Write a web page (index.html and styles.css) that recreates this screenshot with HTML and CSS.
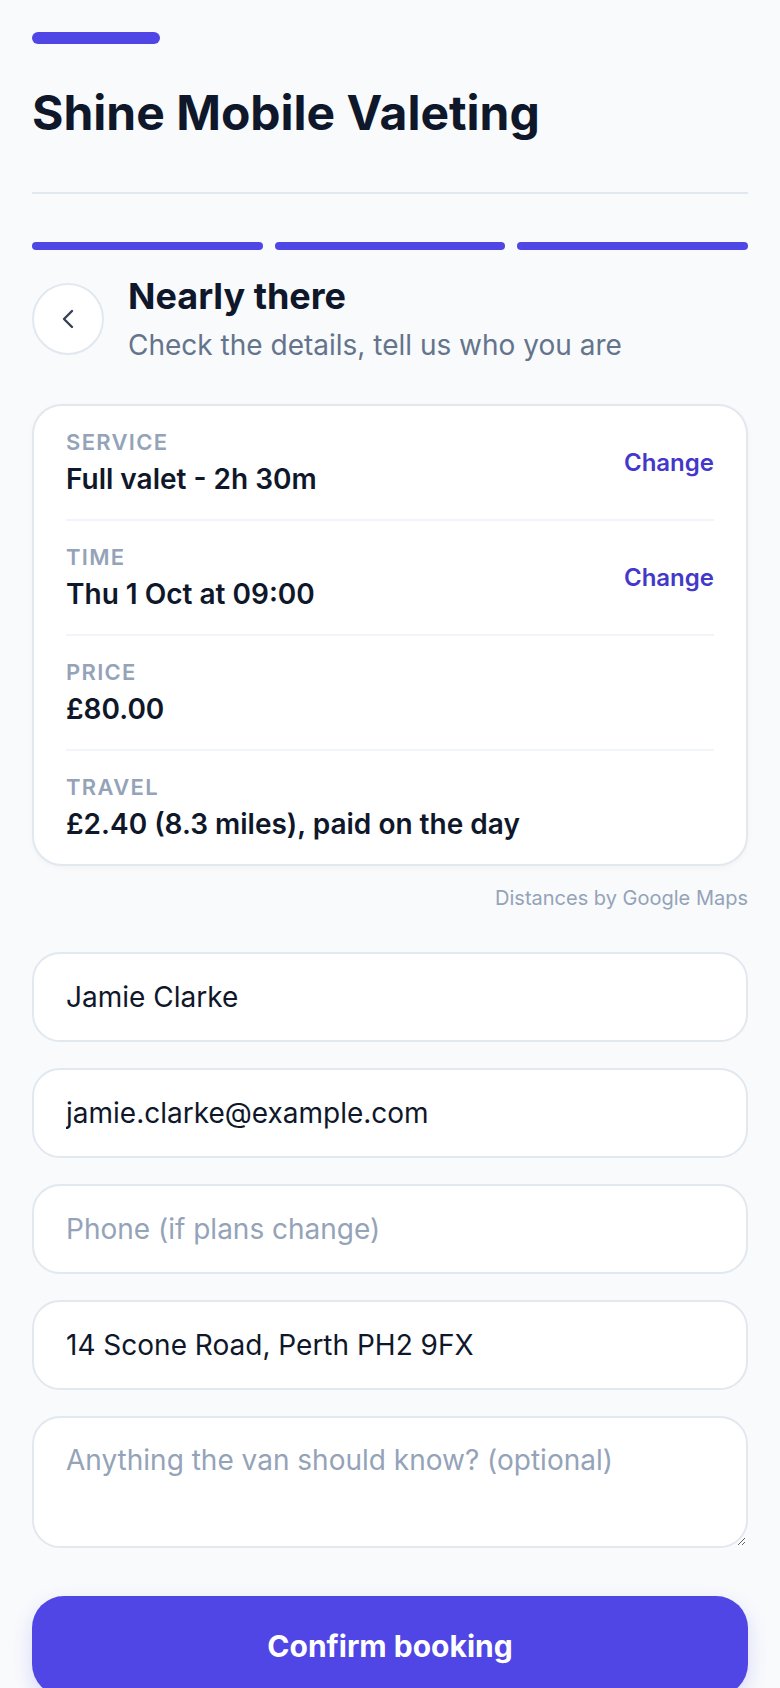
FILE: index.html
```html
<!DOCTYPE html>
<html lang="en">
<head>
  <meta charset="UTF-8" />
  <meta name="viewport" content="width=device-width, initial-scale=1.0"/>
  <title>Shine Mobile Valeting - Book</title>
  <link rel="stylesheet" href="styles.css">
</head>
<body>

  <div class="page">
    <header class="site-header">
      <div class="brand-bar"></div>
      <h1>Shine Mobile Valeting</h1>
    </header>

    <div class="steps">
      <span class="step done"></span>
      <span class="step done"></span>
      <span class="step done"></span>
    </div>

    <div class="intro">
      <button class="back-btn" type="button" aria-label="Back">
        <svg width="14" height="20" viewBox="0 0 14 20">
          <polyline points="11,2 3,10 11,18" fill="none" stroke="#334155" stroke-width="2.4" stroke-linecap="round" stroke-linejoin="round"/>
        </svg>
      </button>
      <div>
        <h2>Nearly there</h2>
        <p class="sub">Check the details, tell us who you are</p>
      </div>
    </div>

    <!-- Booking summary -->
    <div class="summary">
      <div class="row">
        <div>
          <div class="label">Service</div>
          <div class="value">Full valet - 2h 30m</div>
        </div>
        <a class="change" href="#">Change</a>
      </div>
      <div class="row">
        <div>
          <div class="label">Time</div>
          <div class="value">Thu 1 Oct at 09:00</div>
        </div>
        <a class="change" href="#">Change</a>
      </div>
      <div class="row">
        <div>
          <div class="label">Price</div>
          <div class="value">£80.00</div>
        </div>
      </div>
      <div class="row">
        <div>
          <div class="label">Travel</div>
          <div class="value">£2.40 (8.3 miles), paid on the day</div>
        </div>
      </div>
    </div>
    <p class="credit">Distances by Google Maps</p>

    <!-- Customer details -->
    <form class="details">
      <input class="field" type="text" value="Jamie Clarke" placeholder="Your name">
      <input class="field" type="email" value="jamie.clarke@example.com" placeholder="Email">
      <input class="field" type="tel" placeholder="Phone (if plans change)">
      <input class="field" type="text" value="14 Scone Road, Perth PH2 9FX" placeholder="Address">
      <textarea class="field notes" placeholder="Anything the van should know? (optional)"></textarea>
      <button class="confirm" type="button">Confirm booking</button>
    </form>
  </div>

</body>
</html>
```

FILE: styles.css
```css
body {
  margin: 0;
  background-color: #f8fafc;
  font-family: Inter, "Noto Sans", sans-serif;
  color: #0f172a;
}

.page {
  padding: 32px 32px 40px;
}

.site-header {
  padding-bottom: 50px;
  border-bottom: 2px solid #e2e8f0;
}

.brand-bar {
  width: 128px;
  height: 12px;
  border-radius: 6px;
  background-color: #4f46e5;
}

h1 {
  margin: 40px 0 0;
  font-size: 48px;
  line-height: 1.2;
  font-weight: 700;
}

.steps {
  display: grid;
  grid-template-columns: repeat(3, 1fr);
  gap: 12px;
  margin-top: 48px;
}

.step {
  height: 8px;
  border-radius: 4px;
  background-color: #e2e8f0;
}

.step.done {
  background-color: #4f46e5;
}

.intro {
  display: flex;
  align-items: center;
  gap: 24px;
  margin-top: 24px;
}

.back-btn {
  flex: none;
  width: 72px;
  height: 72px;
  border-radius: 50%;
  border: 2px solid #e2e8f0;
  background: white;
  display: flex;
  align-items: center;
  justify-content: center;
  padding: 0;
  cursor: pointer;
}

h2 {
  margin: 0;
  font-size: 36px;
  line-height: 44px;
  font-weight: 700;
}

.sub {
  margin: 8px 0 0;
  font-size: 28px;
  line-height: 38px;
  color: #64748b;
}

.summary {
  margin-top: 40px;
  background: white;
  border: 2px solid #e2e8f0;
  border-radius: 30px;
  padding: 0 32px;
  box-shadow: 0 2px 6px rgba(15, 23, 42, 0.03);
}

.row {
  display: flex;
  align-items: center;
  justify-content: space-between;
  padding: 20px 0;
  border-top: 2px solid #f1f5f9;
}

.row:first-child {
  border-top: none;
}

.label {
  font-size: 22px;
  line-height: 32px;
  font-weight: 600;
  letter-spacing: 0.06em;
  text-transform: uppercase;
  color: #94a3b8;
}

.value {
  margin-top: 2px;
  font-size: 28px;
  line-height: 39px;
  font-weight: 600;
}

.change {
  font-size: 24px;
  font-weight: 600;
  color: #4338ca;
  text-decoration: none;
}

.credit {
  margin: 16px 0 0;
  text-align: right;
  font-size: 20px;
  line-height: 32px;
  color: #94a3b8;
}

.details {
  display: flex;
  flex-direction: column;
  gap: 26px;
  margin-top: 38px;
}

.field {
  box-sizing: border-box;
  width: 100%;
  height: 90px;
  padding: 0 32px;
  border: 2px solid #e2e8f0;
  border-radius: 28px;
  background: white;
  font-family: inherit;
  font-size: 28px;
  color: #0f172a;
  outline: none;
}

.field::placeholder {
  color: #94a3b8;
}

.notes {
  height: 132px;
  padding: 22px 32px;
  line-height: 40px;
  resize: vertical;
}

.confirm {
  margin-top: 22px;
  height: 100px;
  border: none;
  border-radius: 32px;
  background-color: #4f46e5;
  color: white;
  font-family: inherit;
  font-size: 30px;
  font-weight: 700;
  cursor: pointer;
  box-shadow: 0 8px 20px rgba(79, 70, 229, 0.18);
}
```
